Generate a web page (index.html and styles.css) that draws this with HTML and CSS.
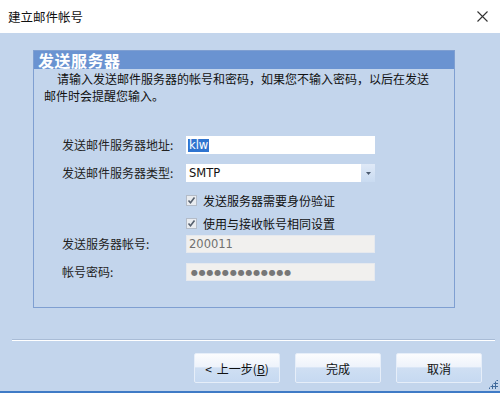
FILE: index.html
```html
<!DOCTYPE html>
<html lang="zh-CN">
<head>
    <meta charset="UTF-8">
    <title>建立邮件帐号</title>
    <link rel="stylesheet" href="styles.css">
</head>
<body>
    <div class="window">
        <div class="titlebar">
            <span class="title">建立邮件帐号</span>
            <svg class="close" width="11" height="11" viewBox="0 0 11 11">
                <path d="M0.5 0.5 L10.5 10.5 M10.5 0.5 L0.5 10.5" stroke="#333" stroke-width="1.1" fill="none"/>
            </svg>
        </div>
        <div class="client">
            <section class="panel">
                <div class="panel-head">发送服务器</div>
                <p class="hint">请输入发送邮件服务器的帐号和密码，如果您不输入密码，以后在发送<br>邮件时会提醒您输入。</p>
                <div class="form">
                    <div class="row row-tall">
                        <label>发送邮件服务器地址:</label>
                        <div class="field"><span class="sel">klw</span></div>
                    </div>
                    <div class="row row-mid">
                        <label>发送邮件服务器类型:</label>
                        <div class="field combo">
                            <span class="combo-text">SMTP</span>
                            <span class="combo-btn">
                                <svg width="5" height="3" viewBox="0 0 5 3"><path d="M0 0 H5 L2.5 3 Z" fill="#4a5a70"/></svg>
                            </span>
                        </div>
                    </div>
                    <div class="row row-cb">
                        <label></label>
                        <div class="check">
                            <span class="box"><svg width="9" height="9" viewBox="0 0 9 9"><path d="M1.5 4.5 L3.5 6.8 L7.5 1.5" stroke="#56606e" stroke-width="1.6" fill="none"/></svg></span>发送服务器需要身份验证
                        </div>
                    </div>
                    <div class="row row-cb">
                        <label></label>
                        <div class="check">
                            <span class="box"><svg width="9" height="9" viewBox="0 0 9 9"><path d="M1.5 4.5 L3.5 6.8 L7.5 1.5" stroke="#56606e" stroke-width="1.6" fill="none"/></svg></span>使用与接收帐号相同设置
                        </div>
                    </div>
                    <div class="row row-tall">
                        <label>发送服务器帐号:</label>
                        <div class="field disabled">200011</div>
                    </div>
                    <div class="row row-tall">
                        <label>帐号密码:</label>
                        <div class="field disabled dots">●●●●●●●●●●●●●</div>
                    </div>
                </div>
            </section>
            <div class="separator"></div>
            <div class="buttons">
                <button class="btn"><span class="lt">&lt;</span>上一步(<u>B</u>)</button>
                <button class="btn">完成</button>
                <button class="btn">取消</button>
            </div>
            <div class="grip"></div>
        </div>
    </div>
</body>
</html>
```

FILE: styles.css
```css
* {
    margin: 0;
    padding: 0;
    box-sizing: border-box;
}

body {
    font-family: "Noto Sans CJK SC", "DejaVu Sans", sans-serif;
    font-size: 12px;
    color: #1a1a1a;
    background: #c3d5ec;
}

.window {
    width: 500px;
    height: 393px;
    display: flex;
    flex-direction: column;
}

.titlebar {
    height: 33px;
    background: #ffffff;
    display: flex;
    align-items: center;
    justify-content: space-between;
    padding: 0 12px 0 8px;
}

.title {
    font-size: 12.5px;
    color: #111;
}

.client {
    flex: 1;
    background: #c3d5ec;
    border-bottom: 2px solid #3f7bc6;
    position: relative;
    display: flex;
    flex-direction: column;
}

.panel {
    margin: 17px 0 0 33px;
    width: 422px;
    height: 258px;
    border: 1px solid #7f9fd1;
}

.panel-head {
    height: 18px;
    background: #6a93d1;
    color: #ffffff;
    font-size: 16px;
    font-weight: bold;
    line-height: 18px;
    padding-left: 4px;
    letter-spacing: 0.5px;
}

.hint {
    font-size: 12px;
    line-height: 17px;
    padding: 1px 0 0 10px;
    text-indent: 13px;
    color: #111;
}

.form {
    margin-top: 32px;
    display: flex;
    flex-direction: column;
}

.row {
    display: flex;
    align-items: flex-start;
}

.row label {
    width: 152px;
    padding-left: 28px;
    line-height: 18px;
    color: #222;
}

.row-tall {
    height: 28px;
}

.row-mid {
    height: 25px;
}

.row-cb {
    height: 23px;
    align-items: center;
}

.field {
    width: 189px;
    height: 18px;
    background: #ffffff;
    font-family: "DejaVu Sans", sans-serif;
    font-size: 11.5px;
    line-height: 17px;
    padding-left: 2px;
    display: flex;
    align-items: center;
}

.sel {
    background: #2f74d0;
    color: #ffffff;
    line-height: 13px;
    padding: 0 1px;
}

.combo {
    padding-left: 0;
}

.combo-text {
    flex: 1;
    padding-left: 3px;
    color: #111;
}

.combo-btn {
    width: 14px;
    height: 18px;
    background: linear-gradient(#dfe9f7, #c9dbf1);
    display: flex;
    align-items: center;
    justify-content: center;
}

.check {
    display: flex;
    align-items: center;
    font-size: 12px;
    color: #111;
}

.box {
    width: 11px;
    height: 11px;
    border: 1px solid #b4bcc8;
    background: #e9ecf0;
    margin-right: 6px;
    display: flex;
    align-items: center;
    justify-content: center;
}

.disabled {
    background: #f1f0ee;
    border: 1px solid #e6e9ee;
    color: #707070;
}

.dots {
    font-size: 8px;
    letter-spacing: 0.8px;
    color: #777;
    padding-left: 4px;
}

.separator {
    margin: 31px 5px 0 12px;
    height: 2px;
    border-top: 1px solid #a9bcd6;
    border-bottom: 1px solid #ffffff;
}

.buttons {
    display: flex;
    justify-content: flex-end;
    gap: 15px;
    margin: 12px 18px 0 0;
}

.btn {
    width: 86px;
    height: 30px;
    border: 1px solid #e6eef9;
    border-radius: 2px;
    background: linear-gradient(#fbfcfe 0%, #eef3fb 45%, #cfdff3 50%, #c6d9f1 100%);
    font-family: "Noto Sans CJK SC", sans-serif;
    font-size: 12px;
    color: #111;
}

.lt {
    margin-right: 5px;
}

.grip {
    position: absolute;
    right: 2px;
    bottom: 2px;
    width: 10px;
    height: 10px;
    background-image: radial-gradient(circle, #3f6a9c 1px, transparent 1.2px);
    background-size: 3px 3px;
    clip-path: polygon(100% 0, 100% 100%, 0 100%);
}
```
